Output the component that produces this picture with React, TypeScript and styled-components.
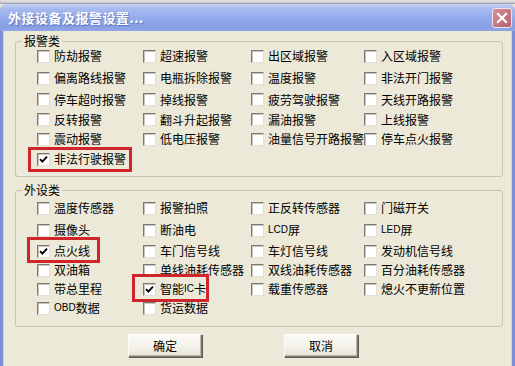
import styled, { createGlobalStyle } from "styled-components";

const GlobalStyle = createGlobalStyle`
  body {
    margin: 0;
    background: #ece9d8;
  }
`;

type Item = { label: string; checked?: boolean; box?: [number, number, number, number] };

const alarmRows: Item[][] = [
  [{ label: "防劫报警" }, { label: "超速报警" }, { label: "出区域报警" }, { label: "入区域报警" }],
  [{ label: "偏离路线报警" }, { label: "电瓶拆除报警" }, { label: "温度报警" }, { label: "非法开门报警" }],
  [{ label: "停车超时报警" }, { label: "掉线报警" }, { label: "疲劳驾驶报警" }, { label: "天线开路报警" }],
  [{ label: "反转报警" }, { label: "翻斗升起报警" }, { label: "漏油报警" }, { label: "上线报警" }],
  [{ label: "震动报警" }, { label: "低电压报警" }, { label: "油量信号开路报警" }, { label: "停车点火报警" }],
  [{ label: "非法行驶报警", checked: true, box: [5, 6, 6, 9] }],
];

const deviceRows: Item[][] = [
  [{ label: "温度传感器" }, { label: "报警拍照" }, { label: "正反转传感器" }, { label: "门磁开关" }],
  [{ label: "摄像头" }, { label: "断油电" }, { label: "LCD屏" }, { label: "LED屏" }],
  [{ label: "点火线", checked: true, box: [7, 10, 5, 10] }, { label: "车门信号线" }, { label: "车灯信号线" }, { label: "发动机信号线" }],
  [{ label: "双油箱" }, { label: "单线油耗传感器" }, { label: "双线油耗传感器" }, { label: "百分油耗传感器" }],
  [{ label: "带总里程" }, { label: "智能IC卡", checked: true, box: [8, 3, 6, 11] }, { label: "载重传感器" }, { label: "熄火不更新位置" }],
  [{ label: "OBD数据" }, { label: "货运数据" }],
];

const Window = styled.div`
  width: 515px;
  height: 366px;
  display: flex;
  flex-direction: column;
  overflow: hidden;
  font-family: "Noto Sans CJK SC", "Liberation Sans", sans-serif;
  font-size: 12px;
  color: #000;
`;

const TopStrip = styled.div`
  height: 4px;
  background: linear-gradient(#e6e6e6, #cfd0d4 60%, #8d8f96);
`;

const TitleBar = styled.div`
  height: 27px;
  display: flex;
  align-items: center;
  justify-content: space-between;
  padding: 0 3px 0 8px;
  border-radius: 6px 6px 0 0;
  background: linear-gradient(#c8d3f3 0%, #a7baef 18%, #93aaea 55%, #889fe5 85%, #90a6e7 100%);
`;

const Title = styled.span`
  color: #fff;
  font-weight: 700;
  font-size: 13px;
  letter-spacing: 0.5px;
  text-shadow: 1px 1px 1px rgba(40, 60, 140, 0.5);
`;

const CloseButton = styled.div`
  width: 18px;
  height: 18px;
  margin-top: 1px;
  border: 1px solid #efe3e8;
  border-radius: 3px;
  background: linear-gradient(135deg, #d8919c, #c0737f 60%, #b36572);
  display: flex;
  align-items: center;
  justify-content: center;
`;

const Client = styled.div`
  flex: 1;
  display: flex;
  flex-direction: column;
  background: #ece9d8;
  border-left: 3px solid #7b8dd9;
  border-right: 3px solid #7b8dd9;
  box-shadow: inset 1px 0 0 #c9d0ee, inset -1px 0 0 #c9d0ee;
  padding: 4px 9px 0 12px;
`;

const Group = styled.fieldset<{ $gap: number }>`
  margin: ${(p) => p.$gap}px 0 0;
  padding: 0 0 ${(p) => (p.$gap > 4 ? 9 : 7)}px;
  border: 1px solid #c6c3b2;
  border-radius: 3px;
  min-width: 0;
`;

const Legend = styled.legend`
  margin-left: 6px;
  padding: 0 2px;
  line-height: 12px;
  font-size: 12px;
`;

const Grid = styled.div<{ $rows: string; $shift: number }>`
  display: grid;
  grid-template-columns: 106px 108px 113px 1fr;
  grid-template-rows: ${(p) => p.$rows};
  margin-top: ${(p) => p.$shift}px;
  padding-left: 21px;
`;

const Cell = styled.div`
  display: flex;
  align-items: center;
  min-width: 0;
`;

const Option = styled.label<{ $box?: [number, number, number, number] }>`
  position: relative;
  display: inline-flex;
  align-items: center;
  gap: 4px;
  white-space: nowrap;
  line-height: 14px;

  ${(p) =>
    p.$box &&
    `
    &::after {
      content: "";
      position: absolute;
      top: -${p.$box[0]}px;
      right: -${p.$box[1]}px;
      bottom: -${p.$box[2]}px;
      left: -${p.$box[3]}px;
      border: 3px solid #d0262b;
      pointer-events: none;
    }
  `}
`;

const Box = styled.span`
  width: 13px;
  height: 13px;
  box-sizing: border-box;
  flex: none;
  background: #fff;
  border: 1px solid;
  border-color: #7a7a72 #e2e0d6 #e2e0d6 #7a7a72;
  box-shadow: inset 1px 1px 0 #c8c6bc;
  display: flex;
  align-items: center;
  justify-content: center;
`;

const Text = styled.span`
  display: inline-flex;
  align-items: center;
`;

const Latin = styled.span`
  font-family: "Liberation Sans", sans-serif;
  font-size: 10px;
`;

const ButtonRow = styled.div`
  display: flex;
  gap: 82px;
  margin: 7px 0 0 113px;
`;

const Button = styled.button`
  width: 74px;
  height: 23px;
  padding: 0;
  font-family: "Noto Sans CJK SC", sans-serif;
  font-size: 12px;
  color: #000;
  background: linear-gradient(#fbfbf8, #f1efe6 70%, #e4e1d4);
  border: 1px solid;
  border-color: #fdfdfb #7d7b72 #7d7b72 #fdfdfb;
  box-shadow: 1px 1px 0 #5a5952, inset -1px -1px 0 #b9b6a8;
`;

const renderLabel = (text: string) =>
  text.split(/([A-Za-z]+)/).map((part, i) =>
    /^[A-Za-z]+$/.test(part) ? <Latin key={i}>{part}</Latin> : part
  );

const Check = ({ item }: { item: Item }) => (
  <Option $box={item.box}>
    <Box>
      {item.checked ? (
        <svg width="9" height="9" viewBox="0 0 9 9">
          <path d="M1 4.2 L3.4 6.6 L8 1.6" fill="none" stroke="#000" strokeWidth="1.9" />
        </svg>
      ) : null}
    </Box>
    <Text>{renderLabel(item.label)}</Text>
  </Option>
);

const OptionGrid = ({ rows, template, shift }: { rows: Item[][]; template: string; shift: number }) => (
  <Grid $rows={template} $shift={shift}>
    {rows.map((row, r) =>
      [0, 1, 2, 3].map((c) => <Cell key={`${r}-${c}`}>{row[c] ? <Check item={row[c]} /> : null}</Cell>)
    )}
  </Grid>
);

const App = () => {
  return (
    <>
      <GlobalStyle />
      <Window>
        <TopStrip />
        <TitleBar>
          <Title>外接设备及报警设置...</Title>
          <CloseButton>
            <svg width="12" height="12" viewBox="0 0 12 12">
              <path d="M2 2 L10 10 M10 2 L2 10" stroke="#fff" strokeWidth="2.2" strokeLinecap="square" />
            </svg>
          </CloseButton>
        </TitleBar>
        <Client>
          <Group $gap={0}>
            <Legend>报警类</Legend>
            <OptionGrid rows={alarmRows} template="22px 22px 21px 19px 20px 20px" shift={-2} />
          </Group>
          <Group $gap={7}>
            <Legend>外设类</Legend>
            <OptionGrid rows={deviceRows} template="22px 22px 20px 18px 20px 18px" shift={1} />
          </Group>
          <ButtonRow>
            <Button>确定</Button>
            <Button>取消</Button>
          </ButtonRow>
        </Client>
      </Window>
    </>
  );
};

export default App;
